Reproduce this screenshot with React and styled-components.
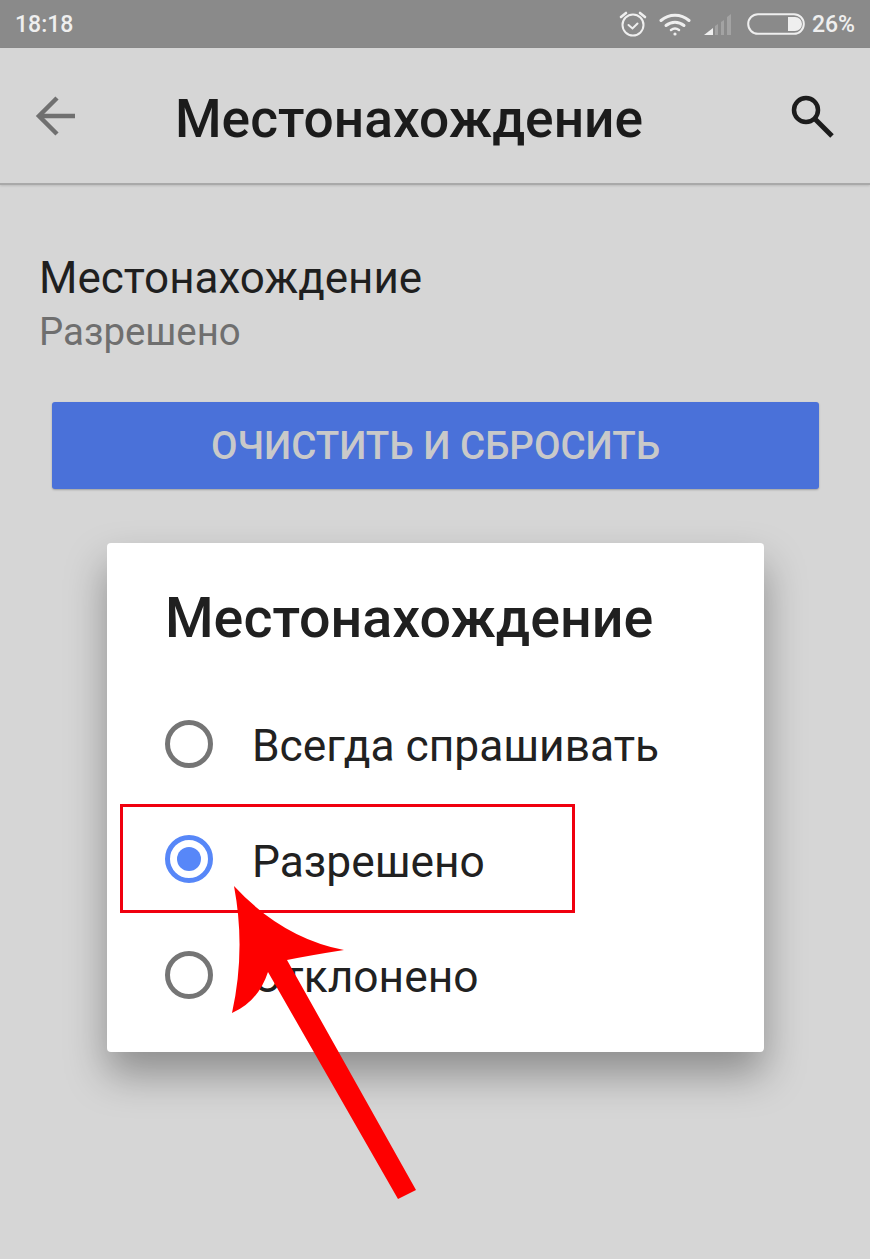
import React from "react";
import styled, { createGlobalStyle } from "styled-components";

const Global = createGlobalStyle`
  html, body { margin: 0; padding: 0; }
  body { background: #d6d6d6; font-family: Roboto, "Noto Sans", sans-serif; }
`;

const Screen = styled.div`
  position: relative;
  width: 870px;
  height: 1259px;
  overflow: hidden;
  background: #d6d6d6;
  display: flex;
  flex-direction: column;
`;

const StatusBar = styled.div`
  height: 48px;
  flex: none;
  background: #8a8a8a;
  color: #efefef;
  display: flex;
  align-items: center;
  justify-content: space-between;
  padding: 0 15px 0 15px;
  font-size: 23px;
  font-weight: 500;
`;

const StatusIcons = styled.div`
  display: flex;
  align-items: center;
  gap: 12px;
`;

const Percent = styled.span`
  margin-left: -5px;
`;

const Toolbar = styled.header`
  height: 137px;
  flex: none;
  box-sizing: border-box;
  border-bottom: 2px solid #a9a9a9;
  box-shadow: 0 1px 2px rgba(0, 0, 0, 0.12);
  display: flex;
  align-items: center;
  padding: 0 35px 0 35px;
`;

const ToolbarTitle = styled.h1`
  flex: 1;
  margin: 7px 0 0 98px;
  font-size: 53.3px;
  line-height: 64px;
  font-weight: 500;
  color: #1b1b1b;
`;

const Setting = styled.section`
  padding: 68px 39px 0;
`;

const SettingName = styled.div`
  font-size: 44px;
  line-height: 50px;
  color: #1f1f1f;
`;

const SettingValue = styled.div`
  font-size: 38.4px;
  line-height: 42px;
  margin-top: 8px;
  margin-bottom: -1px;
  color: #6f6f6f;
`;

const ClearButton = styled.button`
  display: block;
  width: 767px;
  height: 87px;
  margin: 50px 0 0 52px;
  border: 0;
  padding: 0;
  border-radius: 3px;
  background: #4a71d9;
  box-shadow: 0 1px 2px rgba(0, 0, 0, 0.25);
  color: #c9c9c9;
  font-family: inherit;
  font-size: 38.5px;
  font-weight: 500;
`;

const Dialog = styled.div`
  width: 657px;
  height: 509px;
  box-sizing: border-box;
  margin: 54px 0 0 107px;
  padding: 42px 0 0 58px;
  background: #fff;
  border-radius: 4px;
  box-shadow: 0 22px 40px rgba(0, 0, 0, 0.34);
`;

const DialogTitle = styled.h2`
  margin: 0 0 35px 0;
  font-size: 55.6px;
  line-height: 66px;
  font-weight: 500;
  color: #202020;
`;

const Option = styled.div`
  display: flex;
  align-items: center;
  gap: 39px;
  height: 115.5px;
  font-size: 44.3px;
  color: #212121;
`;

const OptionLabel = styled.span`
  padding-top: 5px;
`;

const Radio = styled.span`
  width: 48px;
  height: 48px;
  flex: none;
  box-sizing: border-box;
  border-radius: 50%;
  border: 5px solid ${(props) => (props.$on ? "#5787f8" : "#757575")};
  display: flex;
  align-items: center;
  justify-content: center;
  &::after {
    content: "";
    width: 24px;
    height: 24px;
    border-radius: 50%;
    background: ${(props) => (props.$on ? "#5787f8" : "transparent")};
  }
`;

const Highlight = styled.div`
  position: absolute;
  left: 120px;
  top: 804px;
  width: 455px;
  height: 109px;
  box-sizing: border-box;
  border: 3px solid #f0000f;
`;

const Arrow = styled.svg`
  position: absolute;
  left: 0;
  top: 0;
  pointer-events: none;
`;

const AlarmIcon = () => (
  <svg width="28" height="28" viewBox="0 0 28 28" fill="none" stroke="#efefef" strokeWidth="2">
    <circle cx="14" cy="15" r="10.500" />
    <path d="M9.5 15l4 3.5 5-5" strokeLinecap="round" />
    <path d="M2 7l5-4M26 7l-5-4" strokeWidth="2.6" strokeLinecap="round" />
  </svg>
);

const WifiIcon = () => (
  <svg width="32" height="24" viewBox="0 0 32 24" fill="none" stroke="#efefef" strokeWidth="3" strokeLinecap="round">
    <path d="M2 8.5c8-7 20-7 28 0" />
    <path d="M7 13.5c5.500-4.500 12.500-4.500 18 0" />
    <path d="M12 18c2.500-1.800 5.500-1.800 8 0" strokeWidth="2.5" />
    <circle cx="16" cy="22" r="1.600" fill="#efefef" stroke="none" />
  </svg>
);

const SignalIcon = () => (
  <svg width="32" height="24" viewBox="0 0 32 24">
    <path d="M1 23l9-7v7z" fill="#efefef" />
    <path d="M12 14l3-2v11h-3zM18 10l3-2v15h-3zM24 5l4-3v21h-4z" fill="#a3a3a3" />
  </svg>
);

const BatteryIcon = () => (
  <svg width="58" height="22" viewBox="0 0 58 22" fill="none">
    <rect x="1.200" y="1.200" width="55.600" height="19.600" rx="9.800" stroke="#efefef" strokeWidth="2" />
    <path d="M41 4h7a7 7 0 0 1 0 14h-7z" fill="#efefef" />
  </svg>
);

const BackIcon = () => (
  <svg width="42" height="42" viewBox="0 0 42 42" fill="none" stroke="#707070" strokeWidth="4.500">
    <path d="M40 21H5" />
    <path d="M22 3L4 21l18 18" />
  </svg>
);

const SearchIcon = () => (
  <svg width="46" height="46" viewBox="0 0 46 46" fill="none" stroke="#1c1c1c" strokeWidth="4.500">
    <circle cx="17" cy="17" r="12" />
    <path d="M26 26l17 17" strokeWidth="5" />
  </svg>
);

const App = () => {
  return (
    <Screen>
      <Global />
      <StatusBar>
        <span>18:18</span>
        <StatusIcons>
          <AlarmIcon />
          <WifiIcon />
          <SignalIcon />
          <BatteryIcon />
          <Percent>26%</Percent>
        </StatusIcons>
      </StatusBar>
      <Toolbar>
        <BackIcon />
        <ToolbarTitle>Местонахождение</ToolbarTitle>
        <SearchIcon />
      </Toolbar>
      <Setting>
        <SettingName>Местонахождение</SettingName>
        <SettingValue>Разрешено</SettingValue>
      </Setting>
      <ClearButton>ОЧИСТИТЬ И СБРОСИТЬ</ClearButton>
      <Dialog>
        <DialogTitle>Местонахождение</DialogTitle>
        <Option><Radio /><OptionLabel>Всегда спрашивать</OptionLabel></Option>
        <Option><Radio $on /><OptionLabel>Разрешено</OptionLabel></Option>
        <Option><Radio /><OptionLabel>Отклонено</OptionLabel></Option>
      </Dialog>
      <Highlight />
      <Arrow width="870" height="1259" viewBox="0 0 870 1259">
        <path
          fill="#fe0000"
          d="M234 886 Q282 938 344 950 Q312 955 287 960 L416 1190 L398 1199 L268 972 Q258 1002 232 1013 Q246 950 234 886Z"
        />
      </Arrow>
    </Screen>
  );
};

export default App;
